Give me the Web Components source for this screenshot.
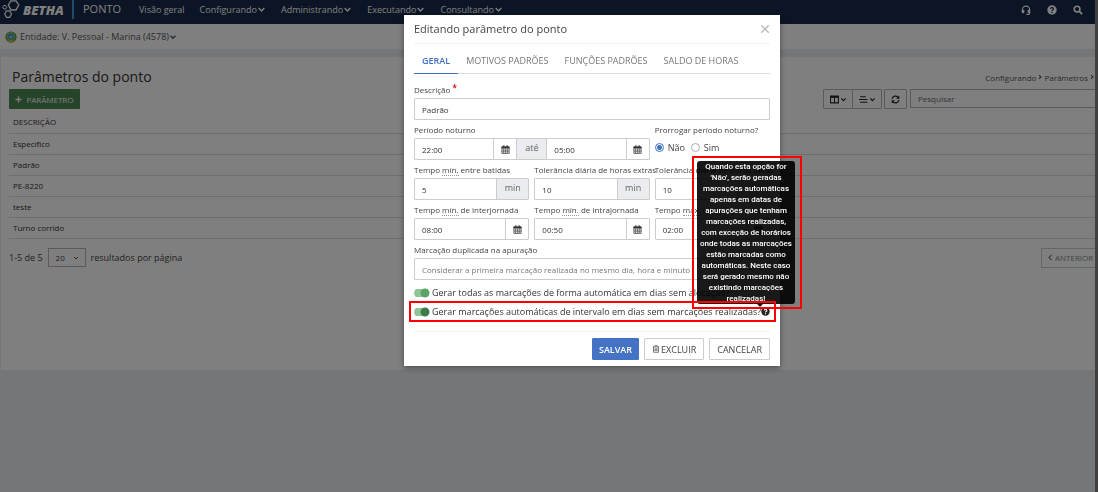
<!DOCTYPE html>
<html lang="pt-BR">
<head>
<meta charset="utf-8">
<title>Parâmetros do ponto</title>
<style>
  html, body { margin: 0; height: 100%; }
  body { font-family: "Open Sans", "Noto Sans", sans-serif; font-size: 9px; color: #333; overflow: hidden; }
</style>
</head>
<body>
<ponto-app></ponto-app>
<script>
const ICONS = {
  chevron: '<path d="M3 5.5 8 10.5 13 5.5" fill="none" stroke="currentColor" stroke-width="2.6"/>',
  right: '<path d="M5.5 3 10.5 8 5.5 13" fill="none" stroke="currentColor" stroke-width="3"/>',
  left: '<path d="M10.5 2 4.5 8 10.5 14" fill="none" stroke="currentColor" stroke-width="3"/>',
  plus: '<path d="M8 1V15M1 8H15" stroke="currentColor" stroke-width="3"/>',
  close: '<path d="M2 2 14 14M14 2 2 14" stroke="currentColor" stroke-width="2.4"/>',
  headset: '<path d="M2.2 11V7.5a5.8 5.8 0 0 1 11.6 0V13q0 2-2 2H8.5" fill="none" stroke="currentColor" stroke-width="1.8"/><rect x="1.3" y="7.5" width="4" height="5.5" rx="1.2" fill="currentColor"/><rect x="10.7" y="7.5" width="4" height="5.5" rx="1.2" fill="currentColor"/>',
  help: '<circle cx="8" cy="8" r="7.5" fill="currentColor"/><path d="M5.8 6.2a2.3 2 0 1 1 3.4 1.7Q8 8.5 8 9.7" fill="none" stroke="var(--mark,#182a4a)" stroke-width="1.9"/><rect x="7" y="11" width="2" height="2" fill="var(--mark,#182a4a)"/>',
  search: '<circle cx="6.5" cy="6.5" r="4.6" fill="none" stroke="currentColor" stroke-width="2.5"/><path d="M10 10 14.5 14.5" stroke="currentColor" stroke-width="3"/>',
  columns: '<path d="M1 2H15V14H1Z M8 4V14" fill="none" stroke="currentColor" stroke-width="1.8"/><path d="M1 3.5H15" stroke="currentColor" stroke-width="3"/>',
  lines: '<path d="M2 3H12M0 8H15M2 13H15" stroke="currentColor" stroke-width="1.9"/>',
  refresh: '<path d="M2 7A6 6 0 0 1 12.5 4M14 9A6 6 0 0 1 3.5 12" fill="none" stroke="currentColor" stroke-width="2.2"/><path d="M14.8 1V6.5H9.3ZM1.2 15V9.5H6.7Z" fill="currentColor"/>',
  calendar: '<path d="M1.5 3H14.5V15H1.5Z" fill="none" stroke="currentColor" stroke-width="1.2"/><path d="M1 3H15V6H1ZM4 .5H6V4H4ZM10 .5H12V4H10Z" fill="currentColor"/><path d="M4.7 6V15M8 6V15M11.3 6V15M1.5 9H14.5M1.5 12H14.5" stroke="currentColor" stroke-width="1"/>',
  trash: '<path d="M1.5 3.8H14.5M5.5 3.5V1.5H10.5V3.5M3 4V14.5H13V4M6 6.5V12M8 6.5V12M10 6.5V12" fill="none" stroke="currentColor" stroke-width="1.4"/>',
  crest: '<circle cx="8" cy="8" r="7.5" fill="#3f9a4a"/><circle cx="8" cy="7.5" r="5.7" fill="#d8c53a"/><circle cx="8" cy="7.5" r="4.6" fill="#3d9fc4"/><path d="M8 5 9 7 11 7.2 9.5 8.5 10 10.5 8 9.5 6 10.5 6.5 8.5 5 7.2 7 7Z" fill="#8fd0c0"/><path d="M3 13Q8 16 13 13" fill="none" stroke="#d8c53a" stroke-width="1.5"/>'
};

function define(name, css, html, setup) {
  const tpl = document.createElement('template');
  tpl.innerHTML = `<style>*{box-sizing:border-box}button,input,select{font:inherit;color:inherit;margin:0}${css}</style>${html}`;
  customElements.define(name, class extends HTMLElement {
    connectedCallback() {
      if (this.shadowRoot) return;
      const root = this.attachShadow({ mode: 'open' });
      root.append(tpl.content.cloneNode(true));
      if (setup) setup(this, root);
    }
  });
}

define('bx-icon', ':host{display:inline-flex;flex:none;width:var(--s,8px);height:var(--s,8px)} svg{width:100%;height:100%;display:block}',
  '<svg viewBox="0 0 16 16" aria-hidden="true"></svg>',
  (el, r) => { r.querySelector('svg').innerHTML = ICONS[el.getAttribute('name')]; });

define('bx-topbar', `
  :host{display:flex;align-items:center;height:24px;background:#182a4a;color:#fff;padding:0 12px 0 2px}
  .brand{display:flex;align-items:center;height:19px;align-self:flex-start;width:72px;border-right:2px solid #3f9be0;gap:3px}
  .brand svg{width:18px;height:19px;flex:none}
  .brand b{font-size:13px;line-height:18px;font-weight:800;font-style:italic}
  .app{font-size:11px;line-height:18px;width:56px;padding-left:9px;align-self:flex-start}
  nav{display:flex;gap:15px;padding-left:9px;height:19px;align-items:center;align-self:flex-start}
  a{color:inherit;text-decoration:none;display:flex;align-items:center;white-space:nowrap;line-height:16px}
  a bx-icon{--s:9px}
  .tools{display:flex;gap:16px;margin-left:auto;height:19px;align-self:flex-start;align-items:center}
  button{border:0;padding:0;background:none;display:flex;--s:10px}`,
  `<div class="brand"><svg viewBox="0 0 18 19" fill="none" stroke="#fff" aria-hidden="true"><path d="M9 .8H14L16.8 5 14 10H9L6.3 5Z" stroke-width="1.3"/><path d="M4.5 10.8H7.7L9.5 14 7.7 17.3H4.5L2.7 14Z" stroke-width="1.2"/><path d="M1.8 5.5H3.8L4.8 7.3 3.8 9H1.8L.8 7.3Z" stroke-width="1"/></svg><b>BETHA</b></div>
   <div class="app">PONTO</div>
   <nav><a href="#">Visão geral</a><a href="#">Configurando<bx-icon name="chevron"></bx-icon></a><a href="#">Administrando<bx-icon name="chevron"></bx-icon></a><a href="#">Executando<bx-icon name="chevron"></bx-icon></a><a href="#">Consultando<bx-icon name="chevron"></bx-icon></a></nav>
   <div class="tools"><button aria-label="Suporte"><bx-icon name="headset"></bx-icon></button><button aria-label="Ajuda"><bx-icon name="help"></bx-icon></button><button aria-label="Buscar"><bx-icon name="search"></bx-icon></button></div>`);

define('bx-entity', `
  :host{display:flex;align-items:center;height:25px;background:#fff;padding-left:5px}
  a{display:flex;align-items:center;color:#555;text-decoration:none}
  .crest{--s:12px;margin-right:3px}`,
  `<a href="#"><bx-icon class="crest" name="crest"></bx-icon>Entidade: V. Pessoal - Marina (4578)<bx-icon name="chevron"></bx-icon></a>`);

define('bx-params', `
  :host{display:block;background:#fff;margin:8px 0 0 1px;padding:8px 0 102px 8px}
  header{display:flex;align-items:center;height:24px;padding-left:3px}
  h1{font-size:14px;font-weight:400;line-height:22px;margin:0;color:#333}
  .crumbs{margin-left:auto;display:flex;align-items:center;gap:1px;font-size:8px;color:#555}
  .crumbs bx-icon{--s:6px}
  .crumbs a{color:inherit;text-decoration:none}
  .bar{display:flex;height:20px;gap:3px}
  .add{background:#4a8852;color:#fff;border:0;border-radius:1px;width:71px;padding:0;font-size:8px;display:flex;align-items:center;justify-content:center;gap:4px;margin-right:auto;--s:7px}
  .group{display:flex;margin-right:-1px}
  .tool{border:1px solid #b5b5b5;background:#fff;padding:0;display:flex;align-items:center;justify-content:center;gap:1px;width:30px;border-radius:1px;color:#222;--s:9px}
  .tool + .tool{margin-left:-1px}
  .tool bx-icon + bx-icon{--s:7px}
  .single{width:23px}
  .find{border:1px solid #b5b5b5;border-right:0;height:19px;width:185px;padding:0 7px;font-size:8px;background:#fff;border-radius:1px;outline:0}
  .find::placeholder{color:#666;opacity:1}
  table{border-collapse:collapse;width:100%;margin-top:3px;font-size:8px;color:#333}
  th,td{text-align:left;font-weight:400;padding:0 4px;height:21px;line-height:16px;border-bottom:1px solid #ddd}
  footer{display:flex;align-items:center;height:20px;margin-top:9px;color:#444}
  .size{width:38px;height:19px;padding:0 7px;border:1px solid #b5b5b5;background:#fff;font-size:8px;appearance:none;grid-area:1/1}
  .pick{display:grid;align-items:center;margin:0 5px}
  .pick bx-icon{grid-area:1/1;justify-self:end;margin-right:7px;--s:6px;pointer-events:none}
  .prev{margin-left:auto;height:20px;width:54px;border:1px solid #ccc;border-right:0;background:#fff;color:#888;padding:0 0 0 5px;font-size:8px;display:flex;align-items:center;gap:1px;--s:7px}`,
  `<header><h1>Parâmetros do ponto</h1><nav class="crumbs"><a href="#">Configurando</a><bx-icon name="right"></bx-icon><a href="#">Parâmetros</a><bx-icon name="right"></bx-icon></nav></header>
   <div class="bar"><button class="add"><bx-icon name="plus"></bx-icon>PARÂMETRO</button>
     <div class="group"><button class="tool" aria-label="Colunas"><bx-icon name="columns"></bx-icon><bx-icon name="chevron"></bx-icon></button><button class="tool" aria-label="Densidade"><bx-icon name="lines"></bx-icon><bx-icon name="chevron"></bx-icon></button></div>
     <button class="tool single" aria-label="Atualizar"><bx-icon name="refresh"></bx-icon></button>
     <input class="find" type="text" placeholder="Pesquisar" aria-label="Pesquisar"></div>
   <table><thead><tr><th>DESCRIÇÃO</th></tr></thead><tbody><tr><td>Específico</td></tr><tr><td>Padrão</td></tr><tr><td>PE-8220</td></tr><tr><td>teste</td></tr><tr><td>Turno corrido</td></tr></tbody></table>
   <footer><label for="size">1-5 de 5</label><span class="pick"><select class="size" id="size"><option>20</option></select><bx-icon name="chevron"></bx-icon></span><span>resultados por página</span>
     <button class="prev"><bx-icon name="left"></bx-icon>ANTERIOR</button></footer>`);

/* Labelled text box with an optional calendar button or unit suffix */
define('bx-field', `
  :host{display:block;min-width:0}
  label{display:block;height:15px;line-height:13px;font-size:8px;color:#444;white-space:nowrap}
  .req{color:#e0201b;font-weight:700;vertical-align:top;line-height:10px}
  .row{display:flex;height:22px;border:1px solid #ccc;border-radius:1px;background:#fff}
  input{flex:1;min-width:0;width:0;border:0;background:none;padding:0 7px;font-size:8px;color:#333;outline:0}
  .cal{width:23px;border:0;border-left:1px solid #ccc;background:none;padding:0;display:flex;align-items:center;justify-content:center;--s:9px;color:#333}
  .unit{width:32px;background:#ebecf0;border-left:1px solid #ccc;text-align:center;line-height:18px;color:#666}
  .join{width:31px;border-right:1px solid #ccc}`,
  `<label for="a"><slot name="label"></slot></label><div class="row"><input id="a" type="text"></div>`,
  (el, r) => {
    const row = r.querySelector('.row'), cal = '<button class="cal" aria-label="Abrir calendário"><bx-icon name="calendar"></bx-icon></button>';
    r.querySelector('input').setAttribute('value', el.getAttribute('value'));
    if (el.hasAttribute('required')) r.querySelector('label').insertAdjacentHTML('beforeend', ' <span class="req">*</span>');
    if (el.hasAttribute('calendar')) row.insertAdjacentHTML('beforeend', cal);
    if (el.hasAttribute('unit')) row.insertAdjacentHTML('beforeend', `<span class="unit">${el.getAttribute('unit')}</span>`);
    if (el.hasAttribute('until')) row.insertAdjacentHTML('beforeend', `<span class="unit join">até</span><input type="text" aria-label="Período noturno até" value="${el.getAttribute('until')}">${cal}`);
  });

define('bx-switch', `
  :host{display:flex;align-items:center;height:19px;color:#333}
  input{appearance:none;width:16px;height:10px;margin:0 2px 0 0;flex:none;border-radius:5px;background:radial-gradient(circle at 11px 5px,var(--knob,#5aa566) 0 4px,transparent 5px),linear-gradient(#8fc598,#8fc598) 0 1px/14px 8px no-repeat;}
  label{white-space:nowrap}`,
  `<input type="checkbox" id="s" checked><label for="s"><slot></slot></label><slot name="after"></slot>`);

define('bx-tooltip', `
  :host{position:absolute;z-index:2;right:-25px;bottom:17px;width:98px}
  .tip{background:rgba(0,0,0,.9);border-radius:3px;color:#fff;font:500 8px/11px Roboto,sans-serif;text-align:center;padding:0 2px;position:relative}
  .tip::after{content:"";position:absolute;top:100%;right:32px;border:3px solid transparent;border-top-color:rgba(0,0,0,.9);border-bottom:0}`,
  `<div class="tip" role="tooltip"><slot></slot></div>`);

define('bx-marker', ':host{position:absolute;border:2px solid #f00;z-index:3;pointer-events:none}', '');

define('bx-dialog', `
  :host{position:fixed;inset:0;background:rgba(0,0,0,.5);display:flex;justify-content:center;align-items:flex-start;padding:15px 0 0 86px}
  section{width:376px;background:#fff;padding:0 10px;box-shadow:0 2px 6px rgba(0,0,0,.4)}
  header{display:flex;align-items:center;justify-content:space-between;height:29px;border-bottom:1px solid #f2f2f2}
  h2{margin:0;font-size:11px;font-weight:400;color:#444;line-height:16px}
  .close{border:0;background:none;padding:0;display:flex;color:#bbb;--s:10px}
  .tabs{display:flex;height:30px;border-bottom:1px solid #ddd}
  .tabs button{border:0;border-bottom:1px solid transparent;background:none;padding:4px 8px 0;color:#777;height:30px;white-space:nowrap}
  .tabs .on{color:#4070c0;font-weight:600;border-color:#4070c0}
  form{display:grid;grid-template-columns:repeat(3,1fr);gap:3px 5px;padding-top:9px}
  .two{grid-column:span 2}.all{grid-column:1/-1}
  .abbr{border-bottom:1px dotted #999}
  fieldset{border:0;margin:0;padding:0;min-width:0}
  legend,.lab{padding:0;display:block;height:15px;line-height:13px;font-size:8px;color:#444;white-space:nowrap}
  .radios{display:flex;align-items:center;height:18px}
  .radios label{color:#444;padding:0 6px 0 4px}
  .radios input{appearance:none;width:9px;height:9px;border:1px solid #aaa;border-radius:50%;flex:none}
  .radios input:checked{border-color:#4070c0;background:radial-gradient(#4070c0 0 2px,#fff 3px)}
  .pick{display:grid;align-items:center}
  .pick select{grid-area:1/1;appearance:none;width:100%;height:22px;border:1px solid #ccc;border-radius:1px;background:#fff;padding:0 7px;font-size:8px;color:#777}
  .pick .ends{grid-area:1/1;justify-self:end;display:flex;gap:4px;padding-right:6px;--s:6px;color:#999;pointer-events:none}
  .switches{padding-top:3px}
  .last{position:relative}
  .last bx-switch{--knob:#427b4b}
  .help{--s:9px;--mark:#fff;color:#222}
  .row-mark{inset:-1px -6px -1px -5px}
  .tip-mark{inset:-5px -7px -5px -5px}
  footer{display:flex;justify-content:flex-end;gap:5px;border-top:1px solid #f2f2f2;margin-top:10px;padding:6px 0}
  footer button{height:22px;border:1px solid #ccc;background:#fff;border-radius:1px;color:#444;padding:0 7px;display:flex;align-items:center;gap:1px;--s:8px}
  footer .save{background:#4472c4;border-color:#4472c4;color:#fff;font-weight:600;padding:0 6px}`,
  `<section role="dialog" aria-labelledby="t"><header><h2 id="t">Editando parâmetro do ponto</h2><button class="close" aria-label="Fechar"><bx-icon name="close"></bx-icon></button></header>
   <div class="tabs" role="tablist"><button class="on" role="tab">GERAL</button><button role="tab">MOTIVOS PADRÕES</button><button role="tab">FUNÇÕES PADRÕES</button><button role="tab">SALDO DE HORAS</button></div>
   <form>
     <bx-field class="all" value="Padrão" required><span slot="label">Descrição</span></bx-field>
     <bx-field class="two" value="22:00" calendar until="05:00"><span slot="label">Período noturno</span></bx-field>
     <fieldset><legend>Prorrogar período noturno?</legend><div class="radios"><input type="radio" name="p" id="n" checked><label for="n">Não</label><input type="radio" name="p" id="y"><label for="y">Sim</label></div></fieldset>
     <bx-field value="5" unit="min"><span slot="label">Tempo <span class="abbr">mín.</span> entre batidas</span></bx-field>
     <bx-field value="10" unit="min"><span slot="label">Tolerância diária de horas extras</span></bx-field>
     <bx-field value="10" unit="min"><span slot="label">Tolerância diária de horas faltas</span></bx-field>
     <bx-field value="08:00" calendar><span slot="label">Tempo <span class="abbr">mín.</span> de interjornada</span></bx-field>
     <bx-field value="00:50" calendar><span slot="label">Tempo <span class="abbr">mín.</span> de intrajornada</span></bx-field>
     <bx-field value="02:00" calendar><span slot="label">Tempo <span class="abbr">máx.</span> de intrajornada</span></bx-field>
     <div class="all"><label class="lab" for="dup">Marcação duplicada na apuração</label><div class="pick"><select id="dup"><option>Considerar a primeira marcação realizada no mesmo dia, hora e minuto</option></select><span class="ends"><bx-icon name="close"></bx-icon><bx-icon name="chevron"></bx-icon></span></div></div>
   </form>
   <div class="switches"><bx-switch>Gerar todas as marcações de forma automática em dias sem alocação?</bx-switch>
     <div class="last"><bx-switch>Gerar marcações automáticas de intervalo em dias sem marcações realizadas?<bx-icon slot="after" class="help" name="help"></bx-icon></bx-switch>
       <bx-tooltip>Quando esta opção for 'Não', serão geradas marcações automáticas apenas em datas de apurações que tenham marcações realizadas, com exceção de horários onde todas as marcações estão marcadas como automáticas. Neste caso será gerado mesmo não existindo marcações realizadas!<bx-marker class="tip-mark"></bx-marker></bx-tooltip>
       <bx-marker class="row-mark"></bx-marker></div></div>
   <footer><button class="save">SALVAR</button><button><bx-icon name="trash"></bx-icon>EXCLUIR</button><button>CANCELAR</button></footer></section>`);

define('ponto-app', `
  :host{display:grid;grid-template-columns:minmax(0,1fr) 3px;min-height:100vh;background:#e9ecf1}
  .rail{background:#808080}`,
  `<main><bx-topbar></bx-topbar><bx-entity></bx-entity><bx-params></bx-params></main><div class="rail"></div><bx-dialog></bx-dialog>`);
</script>
</body>
</html>
